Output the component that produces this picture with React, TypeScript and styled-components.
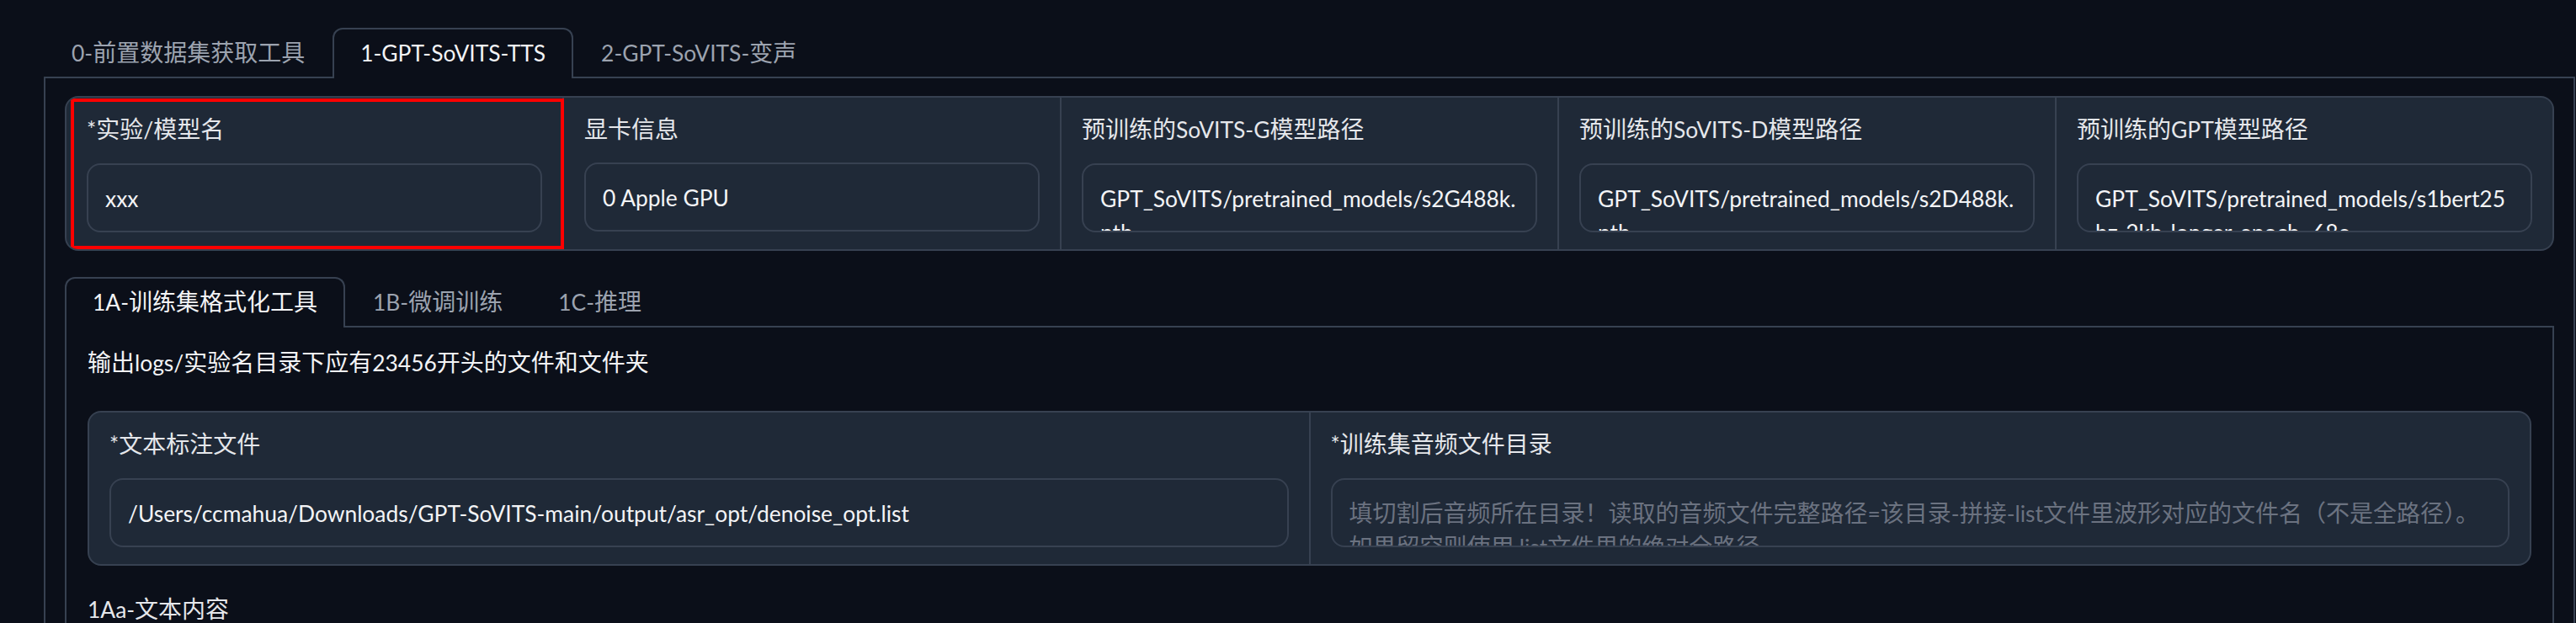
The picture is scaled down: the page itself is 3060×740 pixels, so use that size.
import React from "react";
import styled, { createGlobalStyle, css } from "styled-components";

const GlobalStyle = createGlobalStyle`
  * { box-sizing: border-box; }
  html, body {
    margin: 0;
    padding: 0;
    background: #0b0f19;
  }
  body {
    width: 3060px;
    height: 740px;
    overflow: hidden;
    font-family: Lato, "Noto Sans CJK SC", sans-serif;
    font-size: 28px;
    line-height: 39px;
    color: #f3f4f6;
  }
`;

// Latin runs are set a touch smaller so they keep the narrow width of the original UI font
const LatinRun = styled.span`
  font-size: 0.943em;
`;

const Text: React.FC<{ value: string }> = ({ value }) => (
  <>
    {value
      .split(/([\x00-\x7f]+)/)
      .filter(Boolean)
      .map((part, i) =>
        /^[\x00-\x7f]+$/.test(part) ? <LatinRun key={i}>{part}</LatinRun> : part
      )}
  </>
);

const Page = styled.div`
  padding: 33px 1px 0 52px;
`;

const TabNav = styled.div`
  display: flex;
  border-bottom: 2px solid #374151;
`;

const TabButton = styled.button<{ $active?: boolean }>`
  font: inherit;
  padding: 8px 31px 10px;
  margin-bottom: -2px;
  border: 2px solid transparent;
  border-bottom: none;
  border-radius: 12px 12px 0 0;
  background: transparent;
  color: #9ca3af;
  white-space: nowrap;
  cursor: pointer;

  ${(p) =>
    p.$active &&
    css`
      border-color: #374151;
      background: #0b0f19;
      color: #f3f4f6;
    `}
`;

const TabPanel = styled.div<{ $inner?: boolean }>`
  display: flex;
  flex-direction: column;
  border: 2px solid #374151;
  border-top: none;
  padding: ${(p) => (p.$inner ? "22px 25px 0" : "21px 23px 0")};
`;

const SubTabs = styled.div`
  margin-top: 31px;
`;

const FormRow = styled.div`
  display: flex;
  gap: 2px;
  background: #374151;
  border: 2px solid #374151;
  border-radius: 16px;
  overflow: hidden;
`;

const Block = styled.div<{ $marked?: boolean }>`
  position: relative;
  flex: 1 1 0;
  min-width: 0;
  background: #1f2937;
  padding: 18px 24px 20px;

  ${(p) =>
    p.$marked &&
    css`
      &::after {
        content: "";
        position: absolute;
        top: 1px;
        left: 5px;
        right: -2px;
        bottom: 0;
        border: 4px solid #ff0000;
        pointer-events: none;
      }
    `}
`;

const Label = styled.span`
  display: block;
  color: #e5e7eb;
  margin-bottom: 20px;
  white-space: nowrap;
`;

const Field = styled.div<{ $placeholder?: boolean }>`
  height: 82px;
  padding: 20px;
  border: 2px solid #374151;
  border-radius: 16px;
  background: #1f2937;
  color: ${(p) => (p.$placeholder ? "#6b7280" : "#f3f4f6")};
  overflow: hidden;
  overflow-wrap: break-word;
`;

const Note = styled.p<{ $gap: number }>`
  margin: 0 0 ${(p) => p.$gap}px;
  color: #f3f4f6;
`;

const SectionTitle = styled.p`
  margin: 32px 0 0;
  color: #e5e7eb;
`;

type Input = { label: string; value?: string; placeholder?: string; marked?: boolean };

const modelInputs: Input[] = [
  { label: "*实验/模型名", value: "xxx", marked: true },
  { label: "显卡信息", value: "0 Apple GPU" },
  { label: "预训练的SoVITS-G模型路径", value: "GPT_SoVITS/pretrained_models/s2G488k.pth" },
  { label: "预训练的SoVITS-D模型路径", value: "GPT_SoVITS/pretrained_models/s2D488k.pth" },
  {
    label: "预训练的GPT模型路径",
    value: "GPT_SoVITS/pretrained_models/s1bert25hz-2kh-longer-epoch=68e-step=50232.ckpt",
  },
];

const datasetInputs: Input[] = [
  {
    label: "*文本标注文件",
    value: "/Users/ccmahua/Downloads/GPT-SoVITS-main/output/asr_opt/denoise_opt.list",
  },
  {
    label: "*训练集音频文件目录",
    placeholder:
      "填切割后音频所在目录！读取的音频文件完整路径=该目录-拼接-list文件里波形对应的文件名（不是全路径）。如果留空则使用.list文件里的绝对全路径。",
  },
];

const Fields: React.FC<{ items: Input[] }> = ({ items }) => (
  <FormRow>
    {items.map((it) => (
      <Block key={it.label} $marked={it.marked}>
        <Label>
          <Text value={it.label} />
        </Label>
        <Field $placeholder={!it.value}>
          <Text value={it.value ?? it.placeholder ?? ""} />
        </Field>
      </Block>
    ))}
  </FormRow>
);

const mainTabs = ["0-前置数据集获取工具", "1-GPT-SoVITS-TTS", "2-GPT-SoVITS-变声"];
const subTabs = ["1A-训练集格式化工具", "1B-微调训练", "1C-推理"];

export default function App() {
  return (
    <>
      <GlobalStyle />
      <Page>
        <TabNav>
          {mainTabs.map((t, i) => (
            <TabButton key={t} $active={i === 1}>
              <Text value={t} />
            </TabButton>
          ))}
        </TabNav>
        <TabPanel>
          <Fields items={modelInputs} />
          <SubTabs>
            <TabNav>
              {subTabs.map((t, i) => (
                <TabButton key={t} $active={i === 0}>
                  <Text value={t} />
                </TabButton>
              ))}
            </TabNav>
            <TabPanel $inner>
              <Note $gap={37}>
                <Text value="输出logs/实验名目录下应有23456开头的文件和文件夹" />
              </Note>
              <Fields items={datasetInputs} />
              <SectionTitle>
                <Text value="1Aa-文本内容" />
              </SectionTitle>
            </TabPanel>
          </SubTabs>
        </TabPanel>
      </Page>
    </>
  );
}
